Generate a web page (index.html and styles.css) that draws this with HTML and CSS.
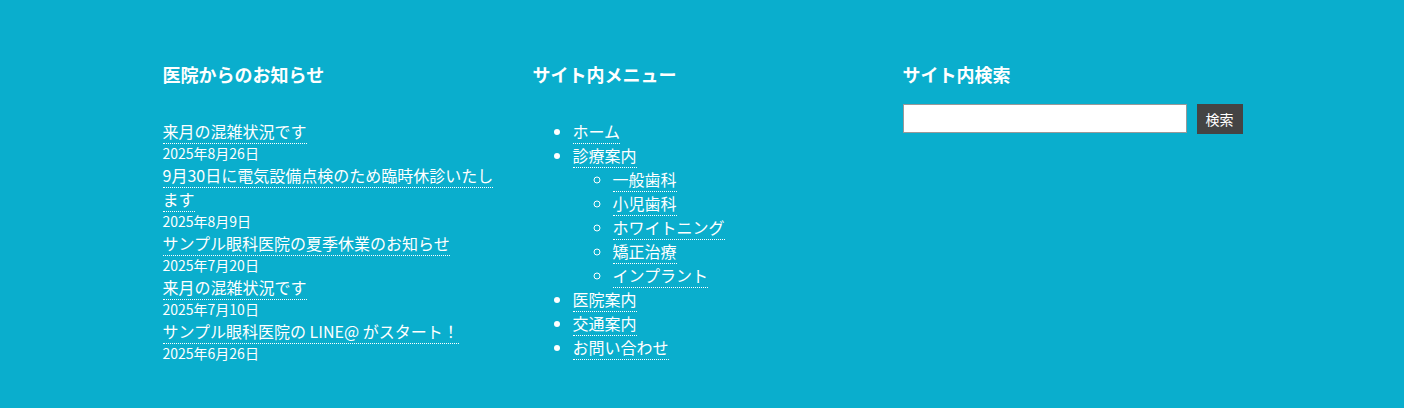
FILE: index.html
```html
<!DOCTYPE html>
<html lang="ja">
<head>
<meta charset="utf-8">
<title>Footer</title>
<link rel="stylesheet" href="styles.css">
</head>
<body>
<footer class="footer">
  <div class="footer-inner">
    <section class="widget">
      <h2 class="widget-title">医院からのお知らせ</h2>
      <ul class="news-list">
        <li><a href="#">来月の混雑状況です</a><span class="date">2025年8月26日</span></li>
        <li><a href="#">9月30日に電気設備点検のため臨時休診いたします</a><span class="date">2025年8月9日</span></li>
        <li><a href="#">サンプル眼科医院の夏季休業のお知らせ</a><span class="date">2025年7月20日</span></li>
        <li><a href="#">来月の混雑状況です</a><span class="date">2025年7月10日</span></li>
        <li><a href="#">サンプル眼科医院の LINE@ がスタート！</a><span class="date">2025年6月26日</span></li>
      </ul>
    </section>
    <section class="widget">
      <h2 class="widget-title">サイト内メニュー</h2>
      <ul class="menu">
        <li><a href="#">ホーム</a></li>
        <li><a href="#">診療案内</a>
          <ul class="sub-menu">
            <li><a href="#">一般歯科</a></li>
            <li><a href="#">小児歯科</a></li>
            <li><a href="#">ホワイトニング</a></li>
            <li><a href="#">矯正治療</a></li>
            <li><a href="#">インプラント</a></li>
          </ul>
        </li>
        <li><a href="#">医院案内</a></li>
        <li><a href="#">交通案内</a></li>
        <li><a href="#">お問い合わせ</a></li>
      </ul>
    </section>
    <section class="widget">
      <h2 class="widget-title">サイト内検索</h2>
      <form class="search-form" onsubmit="return false">
        <input class="search-input" type="text" aria-label="検索">
        <button class="search-btn" type="submit">検索</button>
      </form>
    </section>
  </div>
</footer>
</body>
</html>
```

FILE: styles.css
```css
html, body {
  margin: 0;
  padding: 0;
}
body {
  background: #0aaecd;
  color: #fff;
  font-family: "Noto Sans CJK JP", "Noto Sans", sans-serif;
  height: 408px;
}
.footer {
  padding: 61px 0 0 1px;
}
.footer-inner {
  width: 1080px;
  margin: 0 auto;
  display: grid;
  grid-template-columns: 340px 340px 340px;
  column-gap: 30px;
}
.widget-title {
  margin: 0;
  font-size: 18px;
  line-height: 27px;
  font-weight: bold;
}
a {
  color: #fff;
  text-decoration: none;
  border-bottom: 1px dotted #fff;
}
.news-list {
  list-style: none;
  margin: 31px 0 0;
  padding: 0;
}
.news-list li {
  font-size: 16px;
  line-height: 24px;
}
.date {
  display: block;
  font-size: 14px;
  line-height: 20px;
}
.menu {
  margin: 31px 0 0;
  padding-left: 40px;
  list-style: disc;
  font-size: 16px;
  line-height: 24px;
}
.sub-menu {
  margin: 0;
  padding-left: 40px;
  list-style: circle;
}
.search-form {
  margin-top: 16px;
  display: flex;
  gap: 10px;
}
.search-input {
  width: 284px;
  height: 29px;
  box-sizing: border-box;
  border: 1px solid #999;
  margin: 0;
  padding: 2px 4px;
  background: #fff;
}
.search-btn {
  width: 46px;
  height: 30px;
  border: 0;
  margin: 0;
  padding: 0;
  background: #444;
  color: #fff;
  font-family: "Noto Sans CJK JP", sans-serif;
  font-size: 14px;
}
```
